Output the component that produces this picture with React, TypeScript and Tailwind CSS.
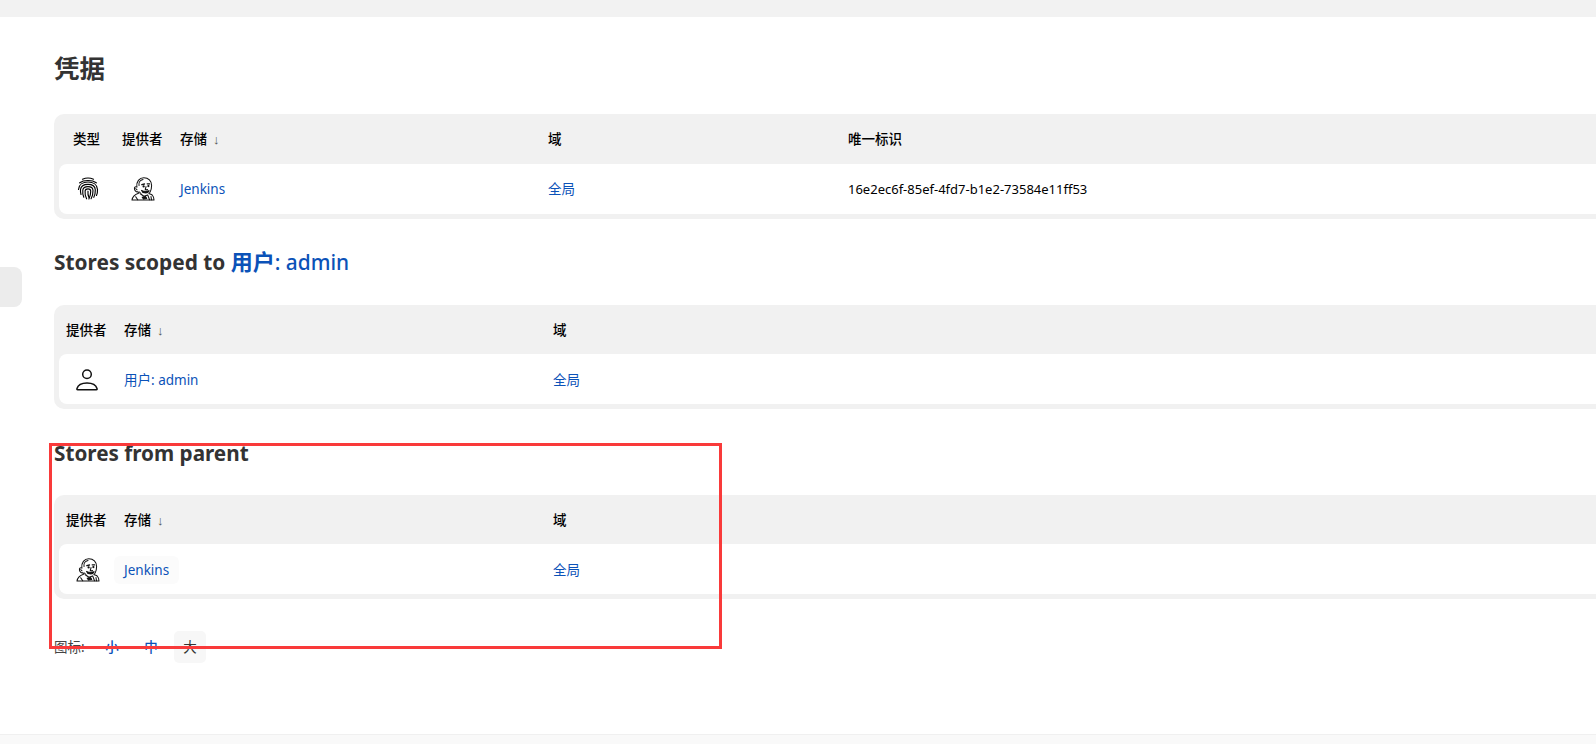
const FONT = "font-['Noto_Sans','Noto_Sans_CJK_SC',sans-serif]";
const LINK = "text-[#0b52b8] no-underline";
const CJK = "text-[13.5px]";

function FingerprintIcon() {
  return (
    <svg width="24" height="24" viewBox="0 0 24 24" fill="none" stroke="#000" strokeWidth="1.150" strokeLinecap="round">
      <path d="M6.500 2.200C9.500 .9 14.500 .9 17.500 2.200" />
      <path d="M3.700 5.800C7.500 2.700 16.500 2.700 20.300 5.800" />
      <path d="M2.500 12.500C2.700 7.500 7 5 12 5s9.300 2.500 9.500 7.500c.1 2.500-.3 4.500-1 6" />
      <path d="M5 17.500c-.5-1.500-.6-3.300-.5-5C4.900 9 8 7.300 12 7.300s7.100 1.900 7.300 5.400c.1 3-.4 5.500-1.500 7.600" />
      <path d="M7.800 20.200c-1-2.300-1.300-4.700-1-7.200C7.100 10.800 9.300 9.600 12 9.600s4.900 1.300 5 3.800c.1 3-.6 5.800-1.900 8.300" />
      <path d="M10.600 21.800c-1.300-2.500-1.800-5-1.500-7.900.2-1.300 1.400-2 2.900-2s2.700.9 2.700 2.300c0 2.800-.6 5.400-1.800 7.800" />
      <path d="M12 14.200c-.3 2.400.1 4.500 1 6.300" />
    </svg>
  );
}

function JenkinsIcon() {
  return (
    <svg width="24" height="24" viewBox="0 0 24 24" fill="none" stroke="#111" strokeWidth="1.050" strokeLinejoin="round" strokeLinecap="round">
      <path d="M5.800 10C5.200 4.500 8.300.8 12.800.8c4.600 0 7.800 3.200 7.800 7.800 0 2.300-.5 4.300-1.300 6-1 2.200-2.900 3.600-5.100 3.600-2.600 0-4.700-1.300-6.200-3.300" fill="#fff" />
      <path d="M5.800 10c-1.600-.7-2.700.5-2.300 2.200.4 1.800 1.900 3.100 3.500 2.500.5.700 1.100 1.300 1.900 1.800" fill="#fff" />
      <path d="M8 8.500C7.500 5.500 9.200 3 12 2.500M4.700 11.500l1.300 1.300" />
      <path d="M10.800 7.600l2.700-.6M16.200 6.800l2.500.1" strokeWidth="1.300" />
      <circle cx="12.600" cy="9.400" r=".6" fill="#111" />
      <circle cx="17.400" cy="9.100" r=".6" fill="#111" />
      <path d="M15 9.600c-.1 1-.4 1.900-.8 2.700.7.500 1.600.5 2.300.2" />
      <path d="M10.500 13.400c2.200 1 4.900 1.200 7.700.4-.8 1.700-2.700 2.700-4.600 2.300-1.500-.3-2.600-1.300-3.100-2.700z" fill="#111" />
      <path d="M7.500 16.200C4 17.300 1.600 19.400 1 23h22c0-2.200-.6-3.800-1.800-5-.9-.7-2-1.100-3-1.300" fill="#fff" />
      <path d="M9.300 16.700l3.600 2.500 3.800-1.300 1.800 4.900" />
      <path d="M11.200 20.200l3.300-.6 1.200 1.800-3.100.7z" fill="#111" />
      <path d="M4.700 19.800l2 3M20 19.500l.5 3.300" />
    </svg>
  );
}

function UserIcon() {
  return (
    <svg width="24" height="24" viewBox="0 0 24 24" fill="none" stroke="#111" strokeWidth="1.500">
      <circle cx="12" cy="6.300" r="4.300" />
      <path d="M2.700 21.800c-.9 0-.9-.5-.7-1.300.9-3.200 4.700-5.500 10-5.500s9.100 2.300 10 5.500c.2.800.2 1.300-.7 1.300z" />
    </svg>
  );
}

type Col = { label: string; sort?: boolean; cell: React.ReactNode; className?: string };

function StoreTable({ cols, template, headH, first, rowPad = "" }: { cols: Col[]; template: string; headH: string; first: string; rowPad?: string }) {
  return (
    <div className="w-[1600px] rounded-[10px] bg-[#f1f1f1] pb-[5px] pl-[5px]">
      <div className={`grid ${template} ${headH} items-center ${CJK} font-medium leading-5 text-black`}>
        {cols.map((c, i) => (
          <div key={i} className={i === 0 ? first : "pl-[14px]"}>
            {c.label}
            {c.sort && <span className="ml-[6px] font-['Liberation_Sans'] text-[13px] font-normal leading-none text-[#555]">↓</span>}
          </div>
        ))}
      </div>
      <div className={`grid ${template} h-[50px] items-center rounded-l-[8px] bg-white text-[13px] leading-5 text-black ${rowPad}`}>
        {cols.map((c, i) => (
          <div key={i} className={c.className ?? "pl-[14px]"}>
            {c.cell}
          </div>
        ))}
      </div>
    </div>
  );
}

export default function App() {
  const jenkinsIcon = <JenkinsIcon />;
  const jenkinsLink = <a className={`${LINK} text-[13.5px]`}>Jenkins</a>;
  const globalLink = <a className={`${LINK} ${CJK}`}>全局</a>;
  return (
    <div className={`relative flex h-[744px] w-[1596px] flex-col overflow-hidden bg-white ${FONT}`}>
      <div className="h-[17px] shrink-0 bg-[#f2f2f2]" />

      <main className="flex-1 pl-[54px]">
        <h1 className="mb-[26px] mt-[31px] h-[40px] text-[25.500px] font-bold leading-[40px] text-[#333]">凭据</h1>

        <StoreTable
          template="grid-cols-[49px_58px_368px_300px_1fr]"
          headH="h-[50px]"
          first="pl-[14px]"
          cols={[
            { label: "类型", cell: <FingerprintIcon />, className: "pl-[17px] flex" },
            { label: "提供者", cell: jenkinsIcon, className: "pl-[23px] flex" },
            { label: "存储", sort: true, cell: jenkinsLink },
            { label: "域", cell: globalLink },
            { label: "唯一标识", cell: "16e2ec6f-85ef-4fd7-b1e2-73584e11ff53" },
          ]}
        />

        <h2 className="mb-[25px] mt-[23px] h-[38px] text-[20.850px] font-bold leading-[38px] text-[#333]">
          Stores scoped to{" "}
          <a className={LINK}>
            <span className="text-[22px]">用户</span>
            <span className="font-medium">: admin</span>
          </a>
        </h2>

        <StoreTable
          template="grid-cols-[51px_429px_1fr]"
          headH="h-[49px]"
          first="pl-[7px]"
          rowPad="pt-[2px]"
          cols={[
            { label: "提供者", cell: <UserIcon />, className: "pl-[16px] flex" },
            { label: "存储", sort: true, cell: <a className={`${LINK} ${CJK}`}>用户: admin</a> },
            { label: "域", cell: globalLink },
          ]}
        />

        <h2 className="mb-[23px] mt-[25px] h-[38px] text-[20.700px] font-bold leading-[38px] text-[#333]">Stores from parent</h2>

        <StoreTable
          template="grid-cols-[51px_429px_1fr]"
          headH="h-[49px]"
          first="pl-[7px]"
          rowPad="pt-[2px]"
          cols={[
            { label: "提供者", cell: jenkinsIcon, className: "pl-[17px] flex" },
            {
              label: "存储",
              sort: true,
              cell: (
                <a className={`${LINK} ml-[4px] inline-block rounded-[6px] bg-[#fbfbfb] px-[10px] py-1 text-[13.5px]`}>Jenkins</a>
              ),
              className: "",
            },
            { label: "域", cell: globalLink },
          ]}
        />

        <div className={`mt-[32px] flex h-[32px] items-center ${CJK} leading-5 text-[#444]`}>
          <span className="w-[42px]">图标:</span>
          <a className={`${LINK} flex h-[32px] w-[32px] items-center justify-center font-medium`}>小</a>
          <span className="w-[7px]" />
          <a className={`${LINK} flex h-[32px] w-[32px] items-center justify-center font-medium`}>中</a>
          <span className="w-[7px]" />
          <span className="flex h-[32px] w-[32px] items-center justify-center rounded-[5px] bg-[#f7f7f7] text-[#333]">大</span>
        </div>
      </main>

      <footer className="h-[10px] shrink-0 border-t border-[#f0f0f0] bg-[#f9f9f9]" />

      <div className="absolute left-0 top-[267px] h-[40px] w-[22px] rounded-r-[8px] bg-[#ececec]" />
      <div className="pointer-events-none absolute left-[49px] top-[443px] h-[206px] w-[673px] border-[3px] border-[#f93a3a]" />
    </div>
  );
}
